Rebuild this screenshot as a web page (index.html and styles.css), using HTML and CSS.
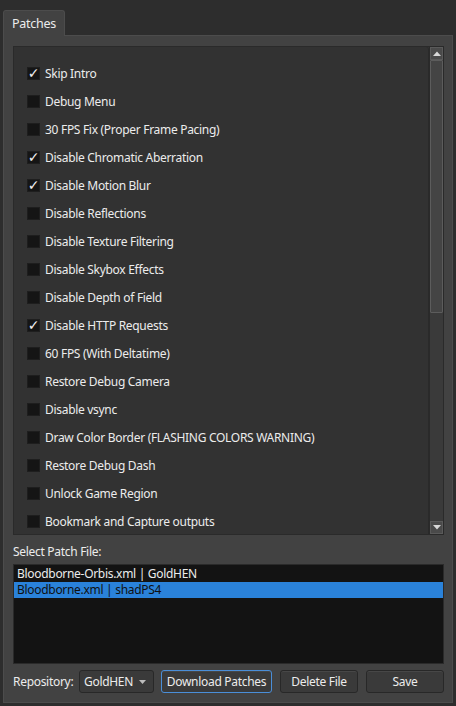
FILE: index.html
```html
<!DOCTYPE html>
<html>
<head>
<meta charset="utf-8">
<link rel="stylesheet" href="styles.css">
</head>
<body>
<div class="window">
  <div class="tabbar">
    <div class="tab">Patches</div>
  </div>
  <div class="pane">
    <div class="frame">
      <div class="viewport">
        <div class="row"><span class="cb on">✓</span><span>Skip Intro</span></div>
        <div class="row"><span class="cb"></span><span>Debug Menu</span></div>
        <div class="row"><span class="cb"></span><span>30 FPS Fix (Proper Frame Pacing)</span></div>
        <div class="row"><span class="cb on">✓</span><span>Disable Chromatic Aberration</span></div>
        <div class="row"><span class="cb on">✓</span><span>Disable Motion Blur</span></div>
        <div class="row"><span class="cb"></span><span>Disable Reflections</span></div>
        <div class="row"><span class="cb"></span><span>Disable Texture Filtering</span></div>
        <div class="row"><span class="cb"></span><span>Disable Skybox Effects</span></div>
        <div class="row"><span class="cb"></span><span>Disable Depth of Field</span></div>
        <div class="row"><span class="cb on">✓</span><span>Disable HTTP Requests</span></div>
        <div class="row"><span class="cb"></span><span>60 FPS (With Deltatime)</span></div>
        <div class="row"><span class="cb"></span><span>Restore Debug Camera</span></div>
        <div class="row"><span class="cb"></span><span>Disable vsync</span></div>
        <div class="row"><span class="cb"></span><span>Draw Color Border (FLASHING COLORS WARNING)</span></div>
        <div class="row"><span class="cb"></span><span>Restore Debug Dash</span></div>
        <div class="row"><span class="cb"></span><span>Unlock Game Region</span></div>
        <div class="row"><span class="cb"></span><span>Bookmark and Capture outputs</span></div>
      </div>
      <div class="scrollbar">
        <div class="sbtn"><svg width="8" height="5" viewBox="0 0 8 5"><path d="M0 5 L4 0.5 L8 5 Z" fill="#d8d8d8"/></svg></div>
        <div class="track"><div class="handle"></div></div>
        <div class="sbtn"><svg width="8" height="5" viewBox="0 0 8 5"><path d="M0 0 L4 4.5 L8 0 Z" fill="#d8d8d8"/></svg></div>
      </div>
    </div>
    <div class="label">Select Patch File:</div>
    <div class="filelist">
      <div class="item">Bloodborne-Orbis.xml | GoldHEN</div>
      <div class="item sel">Bloodborne.xml | shadPS4</div>
    </div>
    <div class="bottom">
      <span class="replabel">Repository:</span>
      <div class="combo"><span>GoldHEN</span><svg width="7" height="4" viewBox="0 0 7 4"><path d="M0 0 L3.5 4 L7 0 Z" fill="#bdbdbd"/></svg></div>
      <div class="btn focus dl">Download Patches</div>
      <div class="btn del">Delete File</div>
      <div class="btn save">Save</div>
    </div>
  </div>
</div>
</body>
</html>
```
FILE: styles.css
```css
* { box-sizing: border-box; }
html, body { margin: 0; padding: 0; }
body {
  background: #2d2d2d;
  width: 456px;
  height: 706px;
  overflow: hidden;
  font-family: "Noto Sans", "Open Sans", sans-serif;
  font-size: 12px;
  letter-spacing: -0.3px;
  color: #ececec;
}
.window { display: flex; flex-direction: column; height: 706px; }
.tabbar { display: flex; padding: 10px 0 0 3px; height: 36px; }
.tab {
  width: 62px;
  height: 26px;
  background: #424242;
  border: 1px solid #4c4c4c;
  border-bottom: none;
  border-radius: 3px 3px 0 0;
  display: flex;
  align-items: center;
  justify-content: center;
  padding-bottom: 1px;
  position: relative;
  z-index: 1;
  font-size: 12.5px;
}
.pane {
  margin: -1px 3px 0 3px;
  height: 668px;
  background: #424242;
  border: 1px solid #4c4c4c;
  padding: 10px 8px 9px 9px;
  display: flex;
  flex-direction: column;
}
.frame {
  height: 489px;
  border: 1px solid #2a2a2a;
  background: #323232;
  display: flex;
  overflow: hidden;
}
.viewport {
  flex: 1;
  padding: 12px 0 0 13px;
  overflow: hidden;
  border-right: 1px solid #2a2a2a;
  border-radius: 0 3px 0 0;
}
.row {
  height: 28px;
  display: flex;
  align-items: center;
  gap: 5px;
  white-space: nowrap;
}
.cb {
  width: 13px;
  height: 13px;
  background: #151515;
  border: 1px solid #1e1e1e;
  flex: none;
  display: flex;
  align-items: center;
  justify-content: center;
  color: #f0f0f0;
  font-family: "DejaVu Sans", sans-serif;
  font-size: 14px;
  letter-spacing: 0;
  line-height: 1;
  overflow: hidden;
}
.scrollbar {
  width: 14px;
  display: flex;
  flex-direction: column;
  background: #3c3c3c;
  border-left: 1px solid #2a2a2a;
}
.sbtn {
  height: 13px;
  flex: none;
  background: #4a4a4a;
  border: 1px solid #5a5a5a;
  display: flex;
  align-items: center;
  justify-content: center;
}
.track { flex: 1; background: #3a3a3a; }
.handle {
  height: 253px;
  background: #444444;
  border: 1px solid #5c5c5c;
  border-radius: 1px;
}
.label {
  height: 29px;
  display: flex;
  align-items: center;
  padding-top: 3px;
}
.filelist {
  height: 100px;
  background: #131313;
  border: 1px solid #2a2a2a;
  padding-top: 1px;
}
.item {
  height: 16px;
  line-height: 16px;
  padding-left: 3px;
  white-space: nowrap;
}
.item.sel { background: #2a82da; color: #101010; }
.bottom {
  margin-top: 6px;
  height: 23px;
  display: flex;
  align-items: center;
}
.replabel { width: 66px; flex: none; }
.combo {
  width: 75px;
  height: 23px;
  background: #3a3a3a;
  border: 1px solid #282828;
  border-radius: 3px;
  display: flex;
  align-items: center;
  justify-content: space-between;
  padding: 0 7px 0 4px;
}
.btn {
  height: 23px;
  background: #3a3a3a;
  border: 1px solid #282828;
  border-radius: 3px;
  display: flex;
  align-items: center;
  justify-content: center;
  box-shadow: inset 0 1px 0 #474747;
}
.btn.focus { border-color: #4a8ed8; }
.dl { width: 111px; margin-left: 7px; }
.del { width: 78px; margin-left: 8px; }
.save { width: 78px; margin-left: 8px; }
```
